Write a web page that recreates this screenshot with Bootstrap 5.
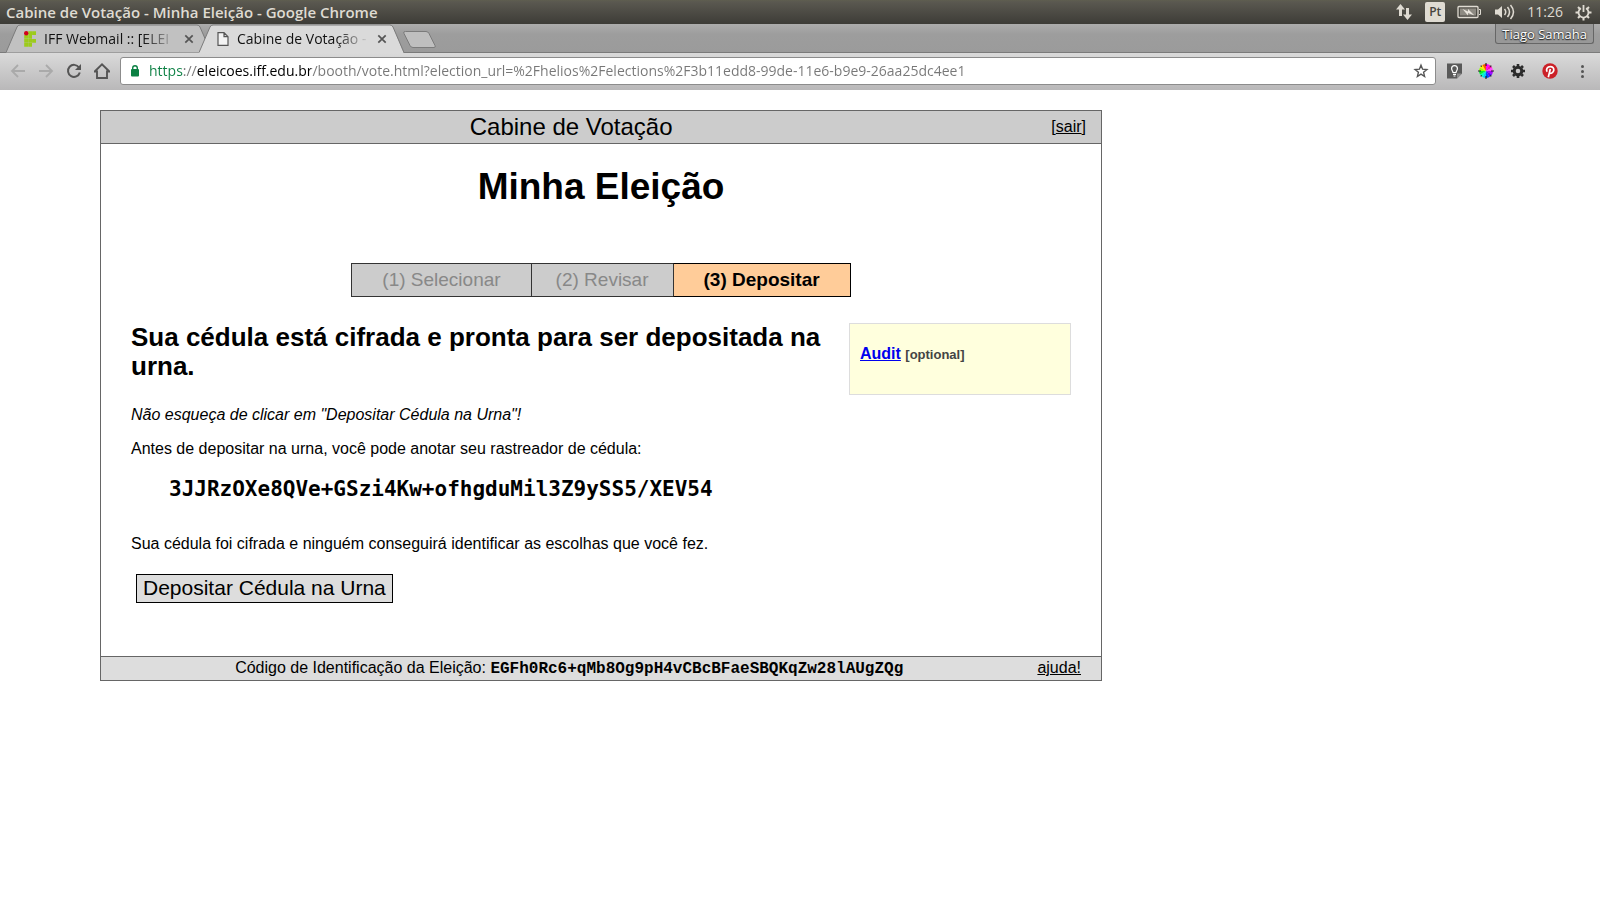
<!DOCTYPE html>
<html lang="pt-BR">
<head>
<meta charset="utf-8">
<meta name="viewport" content="width=device-width, initial-scale=1">
<title>Cabine de Votação - Minha Eleição</title>
<link rel="stylesheet" href="https://cdn.jsdelivr.net/npm/bootstrap@5.3.0/dist/css/bootstrap.min.css">
<style>
body { font-family: "Liberation Sans", Arial, sans-serif; font-size: 16px; line-height: 18px; color: #000; background: #fff; }
svg { display: block; flex: none; }
.chrome-ui { font-family: "Open Sans", "Noto Sans", sans-serif; }

/* desktop panel */
.panel-bar { height: 24px; padding: 0 8px 0 6px; background: linear-gradient(#5f5e4f, #5a5850 2px, #3d3c37); color: #dfdbd2; font-size: 14px; line-height: 24px; }
.panel-title { font-size: 15px; font-weight: 600; }
.panel-icons { gap: 12px; }
.lang-tag { width: 20px; height: 20px; line-height: 20px; border-radius: 2px; background: #dfdbd2; color: #46443e; font-size: 12px; font-weight: 600; text-align: center; }

/* tab strip */
.tab-strip { height: 29px; padding-left: 6px; background: linear-gradient(#acacac, #9d9d9d 10px, #9b9b9b); border-bottom: 1px solid #7b7b7b; }
.tab-item { width: 205px; height: 29px; padding: 0 17px 0 18px; font-size: 14px; line-height: 28px; color: #111; position: relative; }
.tab-item + .tab-item { margin-left: -12px; }
.tab-shape { position: absolute; left: 0; top: 0; }
.tab-item > :not(.tab-shape) { position: relative; }
.tab-text { flex: 1; min-width: 0; white-space: nowrap; -webkit-mask-image: linear-gradient(90deg, #000 75%, transparent); mask-image: linear-gradient(90deg, #000 75%, transparent); }
.plain-btn { border: 0; background: none; padding: 0; }
.new-tab { margin: 4px 0 0 -4px; }
.profile-btn { height: 20px; margin-right: 6px; padding: 2px 6px 0; border: 1px solid #666; border-top: 0; border-radius: 0 0 3px 3px; background: #989898; color: #fff; font-size: 13px; line-height: 17px; text-shadow: 0 0 2px #222, 0 1px 1px #222; }

/* toolbar */
.tool-bar { height: 37px; padding: 0 10px 2px; background: linear-gradient(#dadada, #b9b8b9); }
.nav-btns { gap: 12px; margin-right: 10px; }
.url-box { height: 28px; padding: 0 6px 0 8px; border: 1px solid #8c8c8c; border-radius: 3px; background: #fff; }
.url-input { flex: 1; min-width: 0; height: 24px; margin-left: 8px; padding: 0; border: 0; outline: 0; font-size: 14px; color: transparent; background: linear-gradient(90deg, #0b8043 0 34px, #777 34px 47px, #000 47px 162px, #777 162px); -webkit-background-clip: text; background-clip: text; }
.ext-icons { gap: 16px; margin-left: 10px; }

/* voting booth */
.booth { max-width: 1002px; margin: 20px 100px; border: 1px solid #666; }
.booth a { color: #000; }
.booth-head { height: 33px; padding-right: 15px; background: #ccc; border-bottom: 1px solid #666; }
.booth-head h2 { flex: 1; margin: 0 10px 0 0; font-size: 24px; line-height: 32px; font-weight: 400; text-align: center; }
.booth-body { padding: 22px 30px 53px; }
.booth-body h1 { margin: 0 0 55px; font-size: 37px; line-height: 42px; font-weight: 700; text-align: center; }
.step-list { margin: 0 0 26px; padding: 0; list-style: none; font-size: 19px; line-height: 32px; }
.step-list li { padding: 0 30px; border: 1px solid #333; background: #ccc; color: #888; }
.step-list li + li { margin-left: -1px; padding: 0 24px; }
.step-list li.active-step { padding: 0 30px; border-color: #000; border-left-color: #333; background: #fc9; color: #000; font-weight: 700; }
.ballot { flex: 1; min-width: 0; }
.ballot h3 { margin: 0 0 25px; font-size: 26px; line-height: 29px; font-weight: 700; }
.ballot p { margin: 0 0 16px; }
.tracker { margin: 0 0 34px 38px; padding-top: 3px; font: 700 21px/24px "DejaVu Sans Mono", monospace; }
.cast-btn { margin: 21px 5px 0; padding: 0 6px 2px; border: 1px solid #000; background: #ddd; color: #000; font-size: 21px; line-height: 25px; }
.audit { width: 222px; height: 72px; padding: 21px 10px; border: 1px solid #ddd; background: #ffd; font-weight: 700; }
.audit a { color: #00e; }
.audit span { font-size: 13px; color: #444; }
.booth-foot { height: 24px; padding-right: 20px; border-top: 1px solid #666; background: #ddd; line-height: 22px; }
.booth-foot code { font: 700 16px/18px "Liberation Mono", monospace; color: #000; }
</style>
</head>
<body>
<div class="chrome-ui">
  <header class="panel-bar d-flex justify-content-between align-items-center">
    <div class="panel-title">Cabine de Votação - Minha Eleição - Google Chrome</div>
    <div class="panel-icons d-flex align-items-center">
      <svg width="18" height="18" viewBox="0 0 18 18" fill="#dfdbd2"><path d="M5.500 1L10 6.500H7V13H4V6.500H1zM12.500 17L8 11.500h3V5h3v6.500h3z"/></svg>
      <span class="lang-tag">Pt</span>
      <svg width="25" height="14" viewBox="0 0 25 14"><rect x="1" y="1.500" width="20" height="11" rx="1" fill="none" stroke="#dfdbd2" stroke-width="1.300"/><rect x="3" y="3.500" width="16" height="7" fill="#8d8a82"/><path d="M22 4.500h1.500v5H22" fill="none" stroke="#dfdbd2"/><path d="M5.500 4L11 6.500V4l6.500 6.500L11 8v2.500z" fill="#e8e4dc"/></svg>
      <svg width="21" height="18" viewBox="0 0 21 18"><path d="M1 6.500h3L8 3v12l-4-3.500H1z" fill="#dfdbd2"/><path d="M10.500 6q2.500 3 0 6M13.500 4q4 5 0 10M16.500 2q6 7 0 14" fill="none" stroke="#dfdbd2" stroke-width="1.500"/></svg>
      <time>11:26</time>
      <svg width="17" height="17" viewBox="0 0 17 17" fill="none" stroke="#dfdbd2"><path d="M6 4.200a5 5 0 1 0 5 0" stroke-width="1.800"/><path d="M8.500 1v7" stroke-width="1.800"/><path d="M3 3l2 2M14 3l-2 2M0.500 8.500h3M13.500 8.500h3M3 14l2-2M14 14l-2-2M8.500 13.500v3" stroke-width="2"/></svg>
    </div>
  </header>

  <div class="tab-strip d-flex align-items-start">
    <div class="tab-item d-flex align-items-center">
      <svg class="tab-shape" width="205" height="29"><path d="M0 28.500L11 3q1-2 3-2h177q2 0 3 2l11 25.500" fill="#c1c1c1" stroke="#7b7b7b"/></svg>
      <svg width="12" height="16" viewBox="0 0 12 16" fill="#9ccb1b"><path d="M4.200.2H8v3.700H4.200zM8.100.2H12v3.700H8.100zM.2 4.100H4v3.700H.2zM4.200 4.100H8v3.700H4.200zM.2 8.100H4v3.700H.2zM4.200 8.100H8v3.700H4.200zM8.100 8.100H12v3.700H8.100zM.2 12.100H4v3.700H.2zM4.200 12.100H8v3.700H4.200z"/><circle cx="2.200" cy="2.200" r="2.200" fill="#d2001a"/></svg>
      <span class="tab-text ms-2 me-2">IFF Webmail :: [ELEI</span>
      <button class="plain-btn" type="button" aria-label="Fechar guia"><svg width="10" height="10" viewBox="0 0 10 10" stroke="#555" stroke-width="1.700"><path d="M1.300 1.300l7.400 7.400M8.700 1.300L1.300 8.700"/></svg></button>
    </div>
    <div class="tab-item d-flex align-items-center">
      <svg class="tab-shape" width="205" height="29"><path d="M0 28.500L11 3q1-2 3-2h177q2 0 3 2l10.500 25.500V29H0z" fill="#dadada"/><path d="M0 28.500L11 3q1-2 3-2h177q2 0 3 2l11 25.500" fill="none" stroke="#7b7b7b"/></svg>
      <svg width="12" height="14" viewBox="0 0 12 14" fill="#f3f3f3" stroke="#555" stroke-width="1.200"><path d="M1 .7h6L11 4.700v8.600H1zM7 .7v4h4"/></svg>
      <span class="tab-text ms-2 me-2">Cabine de Votação -</span>
      <button class="plain-btn" type="button" aria-label="Fechar guia"><svg width="10" height="10" viewBox="0 0 10 10" stroke="#555" stroke-width="1.700"><path d="M1.300 1.300l7.400 7.400M8.700 1.300L1.300 8.700"/></svg></button>
    </div>
    <button class="plain-btn new-tab" type="button" aria-label="Nova guia"><svg width="37" height="22" viewBox="0 0 37 22"><path d="M5.500 3.500H26q2 0 3 2l6 12q1 2-1 2H13q-2 0-3-2L4 5.500q-1-2 1-2z" fill="#bfbfbf" stroke="#7b7b7b"/></svg></button>
    <button class="profile-btn ms-auto" type="button">Tiago Samaha</button>
  </div>

  <div class="tool-bar d-flex align-items-center">
    <div class="nav-btns d-flex align-items-center">
      <button class="plain-btn" type="button" aria-label="Voltar"><svg width="16" height="16" viewBox="0 0 16 16" fill="none" stroke="#aaa" stroke-width="1.800"><path d="M15 8H2M8 2L2 8l6 6"/></svg></button>
      <button class="plain-btn" type="button" aria-label="Avançar"><svg width="16" height="16" viewBox="0 0 16 16" fill="none" stroke="#aaa" stroke-width="1.800"><path d="M1 8h13M8 2l6 6-6 6"/></svg></button>
      <button class="plain-btn" type="button" aria-label="Recarregar"><svg width="16" height="16" viewBox="0 0 16 16"><path d="M13 4.500A6 6 0 1 0 13.800 9.500" fill="none" stroke="#555" stroke-width="2"/><path d="M15 1v6H9z" fill="#555"/></svg></button>
      <button class="plain-btn" type="button" aria-label="Página inicial"><svg width="16" height="16" viewBox="0 0 16 16" fill="none" stroke="#555" stroke-width="1.900"><path d="M.7 8.500L8 1.400l7.300 7.100H13V15H3V8.500z"/></svg></button>
    </div>
    <div class="url-box d-flex align-items-center flex-fill">
      <svg width="12" height="14" viewBox="0 0 12 14"><rect x="2" y="5" width="8" height="7.500" rx="1" fill="#0b8043"/><path d="M3.700 6V4a2.300 2.300 0 0 1 4.600 0v2" fill="none" stroke="#0b8043" stroke-width="1.400"/></svg>
      <input class="url-input" type="text" aria-label="Endereço" value="https://eleicoes.iff.edu.br/booth/vote.html?election_url=%2Fhelios%2Felections%2F3b11edd8-99de-11e6-b9e9-26aa25dc4ee1">
      <button class="plain-btn" type="button" aria-label="Favoritar"><svg width="16" height="16" viewBox="0 0 16 16" fill="none" stroke="#555" stroke-width="1.400"><path d="M8 2.200l1.600 4 4.300.3-3.300 2.800 1 4.200L8 11.200l-3.600 2.300 1-4.200-3.300-2.800 4.300-.3z"/></svg></button>
    </div>
    <div class="ext-icons d-flex align-items-center">
      <button class="plain-btn" type="button" aria-label="Notas"><svg width="16" height="16" viewBox="0 0 16 16"><path d="M1 .5h15v10l-5 5H1z" fill="#595959"/><path d="M16 10.500l-5 5v-5z" fill="#8c8c8c"/><path d="M7 9.500C7 8.300 5.600 7.500 5.600 5.600a2.900 2.900 0 0 1 5.800 0c0 1.900-1.400 2.700-1.400 3.900zM7 11.300h3M7.500 13h2" fill="none" stroke="#fff" stroke-width="1.200"/></svg></button>
      <button class="plain-btn" type="button" aria-label="Seletor de cores"><svg width="16" height="16" viewBox="0 0 16 16"><path d="M8 8V1a7 7 0 0 1 3.500 1z" fill="#f0f"/><path d="M8 8l3.500-6A7 7 0 0 1 14 4.500z" fill="#f0a"/><path d="M8 8l6-3.500A7 7 0 0 1 15 8z" fill="#f4f"/><path d="M8 8h7a7 7 0 0 1-1 3.500z" fill="#a0f"/><path d="M8 8l6 3.500a7 7 0 0 1-2.500 2.500z" fill="#50f"/><path d="M8 8l3.500 6A7 7 0 0 1 8 15z" fill="#04f"/><path d="M8 8v7a7 7 0 0 1-3.500-1z" fill="#0cf"/><path d="M8 8l-3.500 6A7 7 0 0 1 2 11.500z" fill="#0fb"/><path d="M8 8l-6 3.500A7 7 0 0 1 1 8z" fill="#0e3"/><path d="M8 8H1a7 7 0 0 1 1-3.500z" fill="#9f0"/><path d="M8 8L2 4.500A7 7 0 0 1 4.500 2z" fill="#fe0"/><path d="M8 8L4.500 2A7 7 0 0 1 8 1z" fill="#f50"/><path d="M8 0v3M8 13v3M0 8h3M13 8h3M2.700 2.700l1 1M13.300 2.700l-1 1M2.700 13.300l1-1M13.300 13.300l-1-1" stroke="#222" stroke-width="1.200"/></svg></button>
      <button class="plain-btn" type="button" aria-label="Configurações"><svg width="16" height="16" viewBox="0 0 16 16" fill="none" stroke="#2b2b2b"><circle cx="8" cy="8" r="3.800" stroke-width="3"/><path d="M8 1v2M8 13v2M1 8h2M13 8h2M3 3l1.500 1.500M11.500 11.500L13 13M3 13l1.500-1.500M11.500 4.500L13 3" stroke-width="2.600"/></svg></button>
      <button class="plain-btn" type="button" aria-label="Pinterest"><svg width="16" height="16" viewBox="0 0 16 16"><circle cx="8" cy="8" r="7.700" fill="#cb2027"/><path d="M6.300 14.200L8.300 6M5.200 8.700C3.600 6.300 5.300 3.700 8.300 3.700c2.400 0 3.700 1.500 3.500 3.500-.3 2.800-3.300 4-4.500 2.200" fill="none" stroke="#fff" stroke-width="1.700"/></svg></button>
      <button class="plain-btn" type="button" aria-label="Menu"><svg width="16" height="16" viewBox="0 0 16 16" fill="#555"><circle cx="8.500" cy="3.500" r="1.500"/><circle cx="8.500" cy="8.500" r="1.500"/><circle cx="8.500" cy="13.500" r="1.500"/></svg></button>
    </div>
  </div>
</div>

<main class="booth">
  <div class="booth-head d-flex align-items-center">
    <h2>Cabine de Votação</h2>
    <div>[<a href="#">sair</a>]</div>
  </div>
  <div class="booth-body">
    <h1>Minha Eleição</h1>
    <ol class="step-list d-flex justify-content-center">
      <li>(1) Selecionar</li>
      <li>(2) Revisar</li>
      <li class="active-step">(3) Depositar</li>
    </ol>
    <div class="d-flex align-items-start gap-3">
      <section class="ballot">
        <h3>Sua cédula está cifrada e pronta para ser depositada na urna.</h3>
        <p><em>Não esqueça de clicar em "Depositar Cédula na Urna"!</em></p>
        <p>Antes de depositar na urna, você pode anotar seu rastreador de cédula:</p>
        <div class="tracker">3JJRzOXe8QVe+GSzi4Kw+ofhgduMil3Z9ySS5/XEV54</div>
        <p>Sua cédula foi cifrada e ninguém conseguirá identificar as escolhas que você fez.</p>
        <button class="cast-btn d-block" type="button">Depositar Cédula na Urna</button>
      </section>
      <aside class="audit"><a href="#">Audit</a> <span>[optional]</span></aside>
    </div>
  </div>
  <div class="booth-foot d-flex">
    <div class="flex-fill text-center">Código de Identificação da Eleição: <code>EGFh0Rc6+qMb8Og9pH4vCBcBFaeSBQKqZw28lAUgZQg</code></div>
    <a href="#">ajuda!</a>
  </div>
</main>
<script src="https://cdn.jsdelivr.net/npm/bootstrap@5.3.0/dist/js/bootstrap.bundle.min.js"></script>
</body>
</html>
